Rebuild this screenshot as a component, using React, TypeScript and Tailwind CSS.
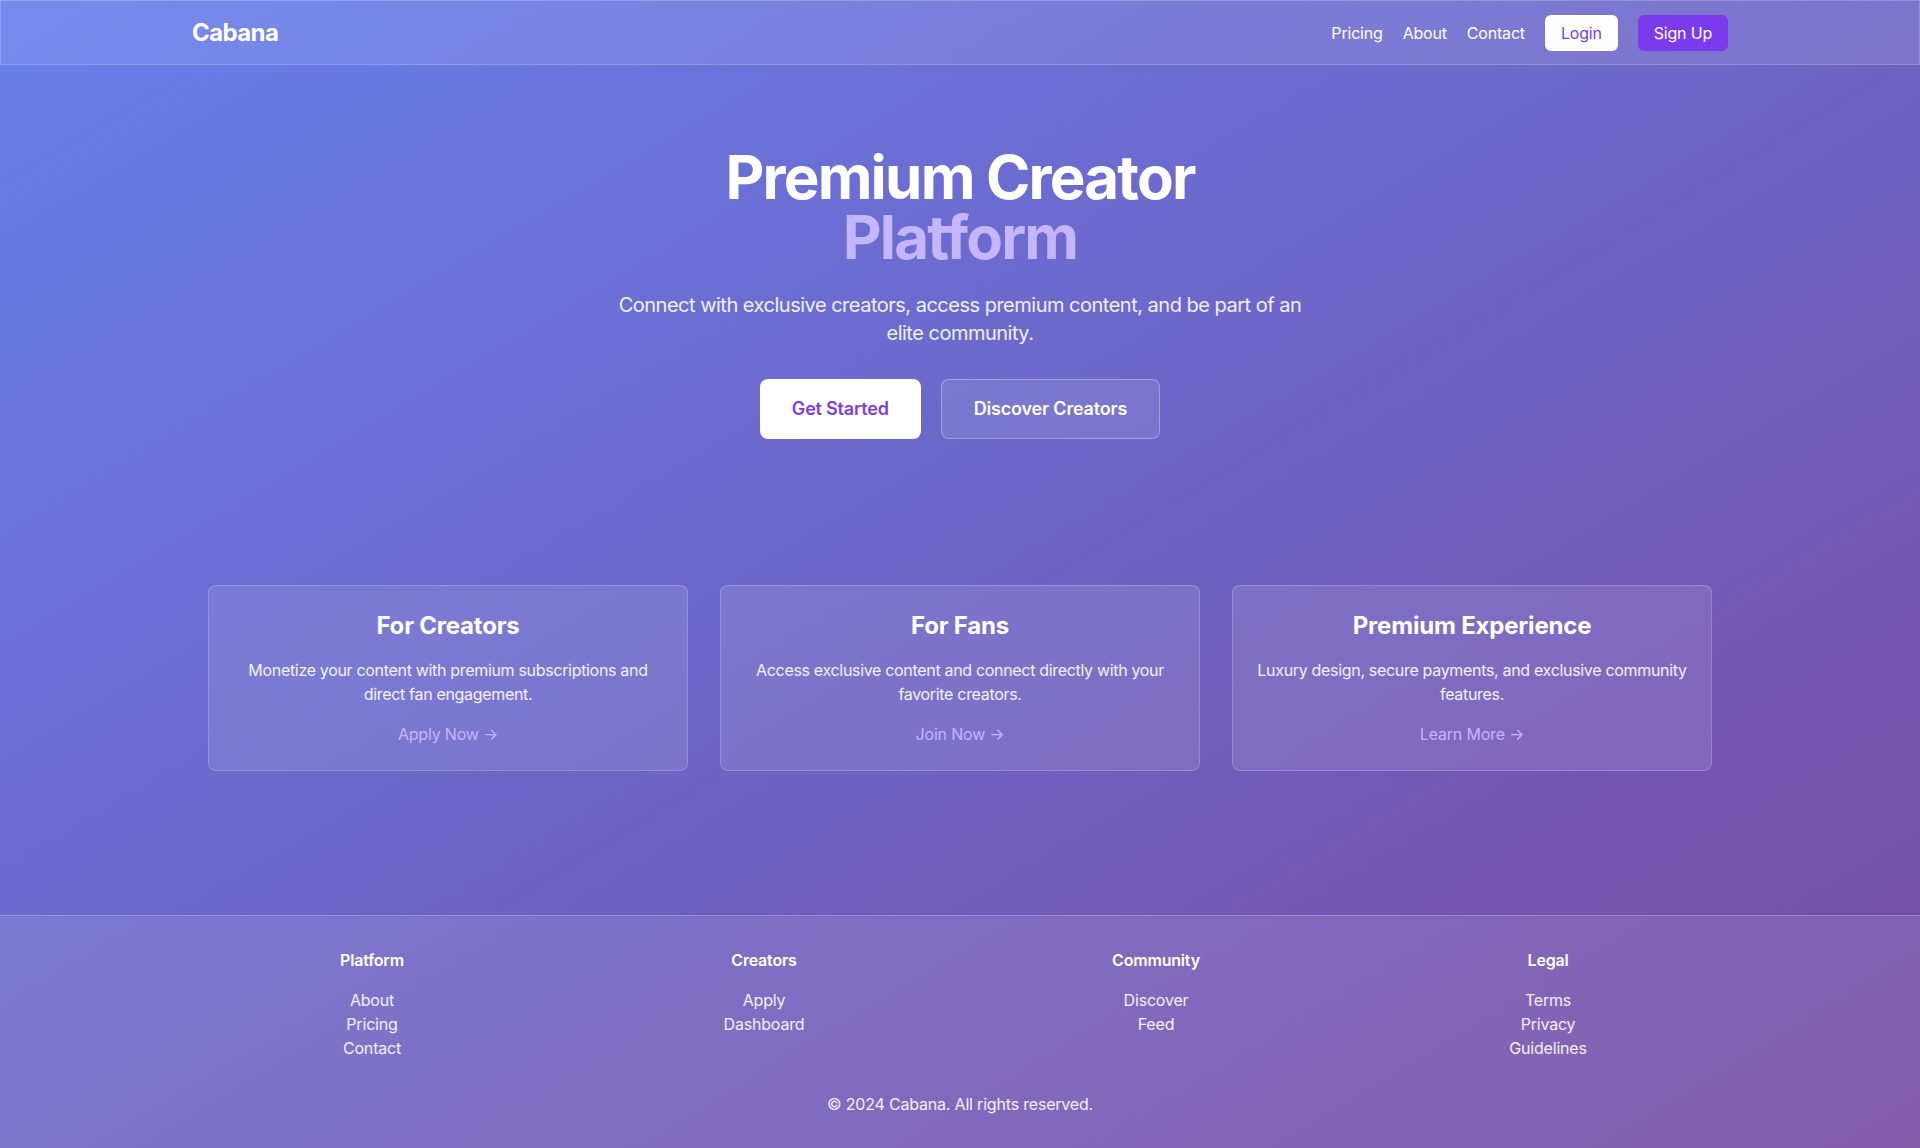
import React from "react";

const cards = [
  {
    title: "For Creators",
    text: "Monetize your content with premium subscriptions and direct fan engagement.",
    link: "Apply Now",
  },
  {
    title: "For Fans",
    text: "Access exclusive content and connect directly with your favorite creators.",
    link: "Join Now",
  },
  {
    title: "Premium Experience",
    text: "Luxury design, secure payments, and exclusive community features.",
    link: "Learn More",
  },
];

const footerCols = [
  { title: "Platform", links: ["About", "Pricing", "Contact"] },
  { title: "Creators", links: ["Apply", "Dashboard"] },
  { title: "Community", links: ["Discover", "Feed"] },
  { title: "Legal", links: ["Terms", "Privacy", "Guidelines"] },
];

export default function App() {
  return (
    <div className="flex min-h-screen flex-col bg-linear-to-br/srgb from-[#667eea] to-[#764ba2] font-['Inter',sans-serif] tracking-[-0.012em] text-white">
      <header className="h-[65px] border border-white/20 bg-white/10">
        <div className="mx-auto flex h-full max-w-[1536px] items-center justify-between">
          <a href="#" className="text-2xl font-bold tracking-tight">Cabana</a>
          <nav className="flex items-center gap-5 text-base">
            <a href="#">Pricing</a>
            <a href="#">About</a>
            <a href="#">Contact</a>
            <a href="#" className="rounded-md bg-white px-4 py-1.5 text-[#7c3aed]">Login</a>
            <a href="#" className="rounded-md bg-[#7c3aed] px-4 py-1.5 text-white">Sign Up</a>
          </nav>
        </div>
      </header>

      <main className="flex-1">
        <section className="flex flex-col items-center px-4 pt-[82px] text-center">
          <h1 className="text-6xl leading-none font-bold tracking-[-0.03em]">
            Premium Creator
            <span className="block text-[#c4b5fd]">Platform</span>
          </h1>
          <p className="mt-6 max-w-[700px] text-xl tracking-[-0.025em] text-white/90">
            Connect with exclusive creators, access premium content, and be part of an elite community.
          </p>
          <div className="mt-8 flex gap-5">
            <a href="#" className="rounded-lg bg-white px-8 py-4 text-lg font-semibold text-[#7c3aed]">Get Started</a>
            <a href="#" className="rounded-lg border border-white/30 bg-white/10 px-8 py-[15px] text-lg font-semibold">Discover Creators</a>
          </div>
        </section>

        <section className="mx-auto mt-[146px] max-w-[1536px] px-4">
          <div className="grid grid-cols-3 gap-8">
            {cards.map((c) => (
              <div key={c.title} className="rounded-lg border border-white/20 bg-white/10 p-6 text-center">
                <h3 className="mb-4 text-2xl font-bold">{c.title}</h3>
                <p className="text-base tracking-[-0.02em] text-white/90">{c.text}</p>
                <a href="#" className="mt-4 inline-block text-base text-[#c4b5fd]">{c.link} →</a>
              </div>
            ))}
          </div>
        </section>
      </main>

      <footer className="border-t border-white/20 bg-white/10 py-8">
        <div className="mx-auto max-w-[1536px] px-4">
          <div className="grid grid-cols-4 gap-16 text-center">
            {footerCols.map((col) => (
              <div key={col.title}>
                <h4 className="mb-4 text-base font-semibold">{col.title}</h4>
                <ul className="text-base text-white/90">
                  {col.links.map((l) => (
                    <li key={l}><a href="#">{l}</a></li>
                  ))}
                </ul>
              </div>
            ))}
          </div>
          <p className="mt-8 text-center text-base text-white/90">© 2024 Cabana. All rights reserved.</p>
        </div>
      </footer>
    </div>
  );
}
